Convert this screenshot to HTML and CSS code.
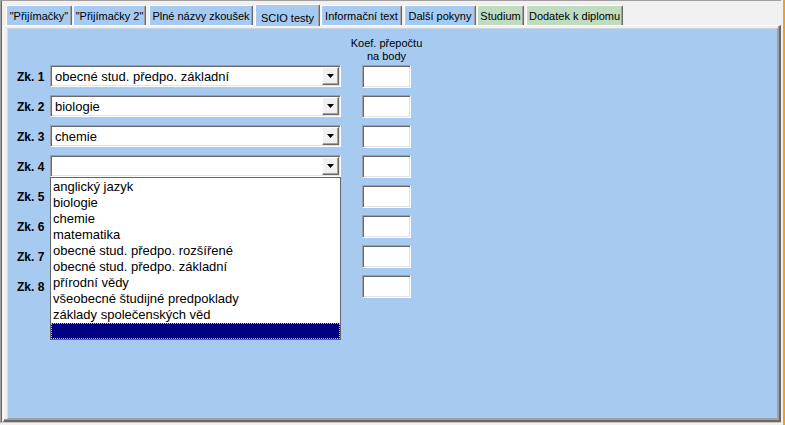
FILE: index.html
```html
<!DOCTYPE html>
<html lang="cs">
<head>
<meta charset="utf-8">
<title>SCIO testy</title>
<link rel="stylesheet" href="styles.css">
</head>
<body>
<div class="screen">
  <div class="window">
    <div class="tabs">
      <div class="tab t-prij1">"Přijímačky"</div>
      <div class="tab t-prij2">"Přijímačky 2"</div>
      <div class="tab t-nazvy">Plné názvy zkoušek</div>
      <div class="tab t-scio active">SCIO testy</div>
      <div class="tab t-info">Informační text</div>
      <div class="tab t-dalsi">Další pokyny</div>
      <div class="tab t-studium green">Studium</div>
      <div class="tab t-dodatek green">Dodatek k diplomu</div>
    </div>
    <div class="page">
      <div class="panel">
        <div class="form">
          <div class="head">
            <div class="head-text">Koef. přepočtu<br>na body</div>
          </div>
          <div class="row">
            <div class="label">Zk. 1</div>
            <div class="slot"><div class="combo"><span class="combo-text">obecné stud. předpo. základní</span><span class="btn"><svg width="7" height="4" viewBox="0 0 7 4"><path d="M0 0h7L3.5 4z" fill="#000"/></svg></span></div></div>
            <div class="num"></div>
          </div>
          <div class="row">
            <div class="label">Zk. 2</div>
            <div class="slot"><div class="combo"><span class="combo-text">biologie</span><span class="btn"><svg width="7" height="4" viewBox="0 0 7 4"><path d="M0 0h7L3.5 4z" fill="#000"/></svg></span></div></div>
            <div class="num"></div>
          </div>
          <div class="row">
            <div class="label">Zk. 3</div>
            <div class="slot"><div class="combo"><span class="combo-text">chemie</span><span class="btn"><svg width="7" height="4" viewBox="0 0 7 4"><path d="M0 0h7L3.5 4z" fill="#000"/></svg></span></div></div>
            <div class="num"></div>
          </div>
          <div class="row">
            <div class="label">Zk. 4</div>
            <div class="slot"><div class="combo"><span class="combo-text"></span><span class="btn"><svg width="7" height="4" viewBox="0 0 7 4"><path d="M0 0h7L3.5 4z" fill="#000"/></svg></span></div></div>
            <div class="num"></div>
          </div>
          <div class="row">
            <div class="label">Zk. 5</div>
            <div class="slot"></div>
            <div class="num"></div>
          </div>
          <div class="row">
            <div class="label">Zk. 6</div>
            <div class="slot"></div>
            <div class="num"></div>
          </div>
          <div class="row">
            <div class="label">Zk. 7</div>
            <div class="slot"></div>
            <div class="num"></div>
          </div>
          <div class="row">
            <div class="label">Zk. 8</div>
            <div class="slot"></div>
            <div class="num"></div>
          </div>
        </div>
        <div class="list">
          <div class="item">anglický jazyk</div>
          <div class="item">biologie</div>
          <div class="item">chemie</div>
          <div class="item">matematika</div>
          <div class="item">obecné stud. předpo. rozšířené</div>
          <div class="item">obecné stud. předpo. základní</div>
          <div class="item">přírodní vědy</div>
          <div class="item">všeobecné študijné predpoklady</div>
          <div class="item">základy společenských věd</div>
          <div class="item selected"></div>
        </div>
      </div>
    </div>
  </div>
  <div class="edge"></div>
</div>
</body>
</html>
```
FILE: styles.css
```css
* { box-sizing: border-box; }

body {
  margin: 0;
  width: 785px;
  height: 425px;
  overflow: hidden;
  background: #f0f0f0;
  font-family: "Liberation Sans", Arial, sans-serif;
  color: #000;
}

.screen {
  display: flex;
  height: 425px;
}

.window {
  width: 781px;
  height: 423px;
  border-top: 1px solid #a0a0a0;
  border-left: 1px solid #a0a0a0;
  border-bottom: 1px solid #c8c8c8;
  box-shadow: inset 1px 0 #696969;
  padding-left: 1px;
  display: flex;
  flex-direction: column;
}

.edge {
  width: 2px;
  margin-left: 2px;
  height: 425px;
  background: #f0a020;
}

/* tabs */
.tabs {
  display: flex;
  align-items: flex-end;
  height: 24px;
  padding-left: 4px;
}

.tab {
  height: 20px;
  background: #a6caf0;
  border-top: 1px solid #fff;
  border-left: 1px solid #fff;
  border-right: 1px solid #696969;
  box-shadow: inset -1px 0 #a0a0a0;
  border-radius: 2px 2px 0 0;
  font-size: 11px;
  white-space: nowrap;
  display: flex;
  align-items: center;
  justify-content: center;
}

.tab.green { background: #c0dcc0; }

.tab.active {
  height: 22px;
  margin-bottom: -1px;
  padding-top: 4px;
  position: relative;
  z-index: 1;
}

.t-prij1 { width: 66px; margin-right: 1px; }
.t-prij2 { width: 73px; margin-right: 3px; }
.t-nazvy { width: 104px; margin-right: 2px; }
.t-scio { width: 65px; margin-right: 1px; }
.t-info { width: 81px; margin-right: 2px; }
.t-dalsi { width: 72px; margin-right: 1px; }
.t-studium { width: 47px; margin-right: 2px; }
.t-dodatek { width: 97px; }

/* page */
.page {
  margin-left: 1px;
  width: 778px;
  height: 397px;
  border-top: 1px solid #fff;
  border-left: 1px solid #fff;
  border-right: 2px solid #696969;
  border-bottom: 2px solid #696969;
  box-shadow: inset -1px -1px #a0a0a0;
  padding: 2px 1px 1px 3px;
}

.panel {
  position: relative;
  width: 100%;
  height: 100%;
  background: #a6caf0;
  border: 1px solid #a0a0a0;
  border-top-color: #c8d4e0;
  border-left-color: #d8dde4;
}

.form {
  display: flex;
  flex-direction: column;
  padding: 8px 0 0 9px;
}

.head {
  display: flex;
  height: 28px;
  padding-left: 345px;
}

.head-text {
  width: 49px;
  display: flex;
  justify-content: center;
  text-align: center;
  white-space: nowrap;
  font-size: 11px;
  line-height: 13px;
}

.row {
  display: flex;
  align-items: flex-start;
  height: 30px;
}

.label {
  width: 33px;
  height: 23px;
  display: flex;
  align-items: center;
  font-size: 12px;
  font-weight: bold;
  white-space: nowrap;
}

.slot {
  width: 312px;
}

.combo {
  width: 291px;
  height: 22px;
  background: #fff;
  border-top: 1px solid #a0a0a0;
  border-left: 1px solid #a0a0a0;
  border-right: 1px solid #fff;
  border-bottom: 1px solid #fff;
  box-shadow: inset 1px 1px #696969, inset -1px -1px #e3e3e3;
  display: flex;
  align-items: center;
  padding: 0 1px 0 4px;
}

.combo-text {
  flex: 1;
  font-size: 13px;
  white-space: nowrap;
}

.btn {
  width: 17px;
  height: 18px;
  background: #f0f0f0;
  border: 1px solid;
  border-color: #fff #696969 #696969 #fff;
  box-shadow: inset -1px -1px #a0a0a0;
  display: flex;
  align-items: center;
  justify-content: center;
}

.num {
  width: 49px;
  height: 23px;
  background: #fff;
  border-top: 1px solid #a0a0a0;
  border-left: 1px solid #a0a0a0;
  border-right: 1px solid #fff;
  border-bottom: 1px solid #fff;
  box-shadow: inset 1px 1px #696969, inset -1px -1px #e3e3e3;
}

/* dropdown list overlay */
.list {
  position: absolute;
  left: 42px;
  top: 148px;
  width: 291px;
  height: 163px;
  background: #fff;
  border: 1px solid #646464;
  padding-top: 1px;
}

.item {
  height: 16px;
  line-height: 16px;
  padding-left: 2px;
  font-size: 13px;
  white-space: nowrap;
}

.item.selected {
  background: #000080;
  border: 1px dotted #c8c890;
}
```
